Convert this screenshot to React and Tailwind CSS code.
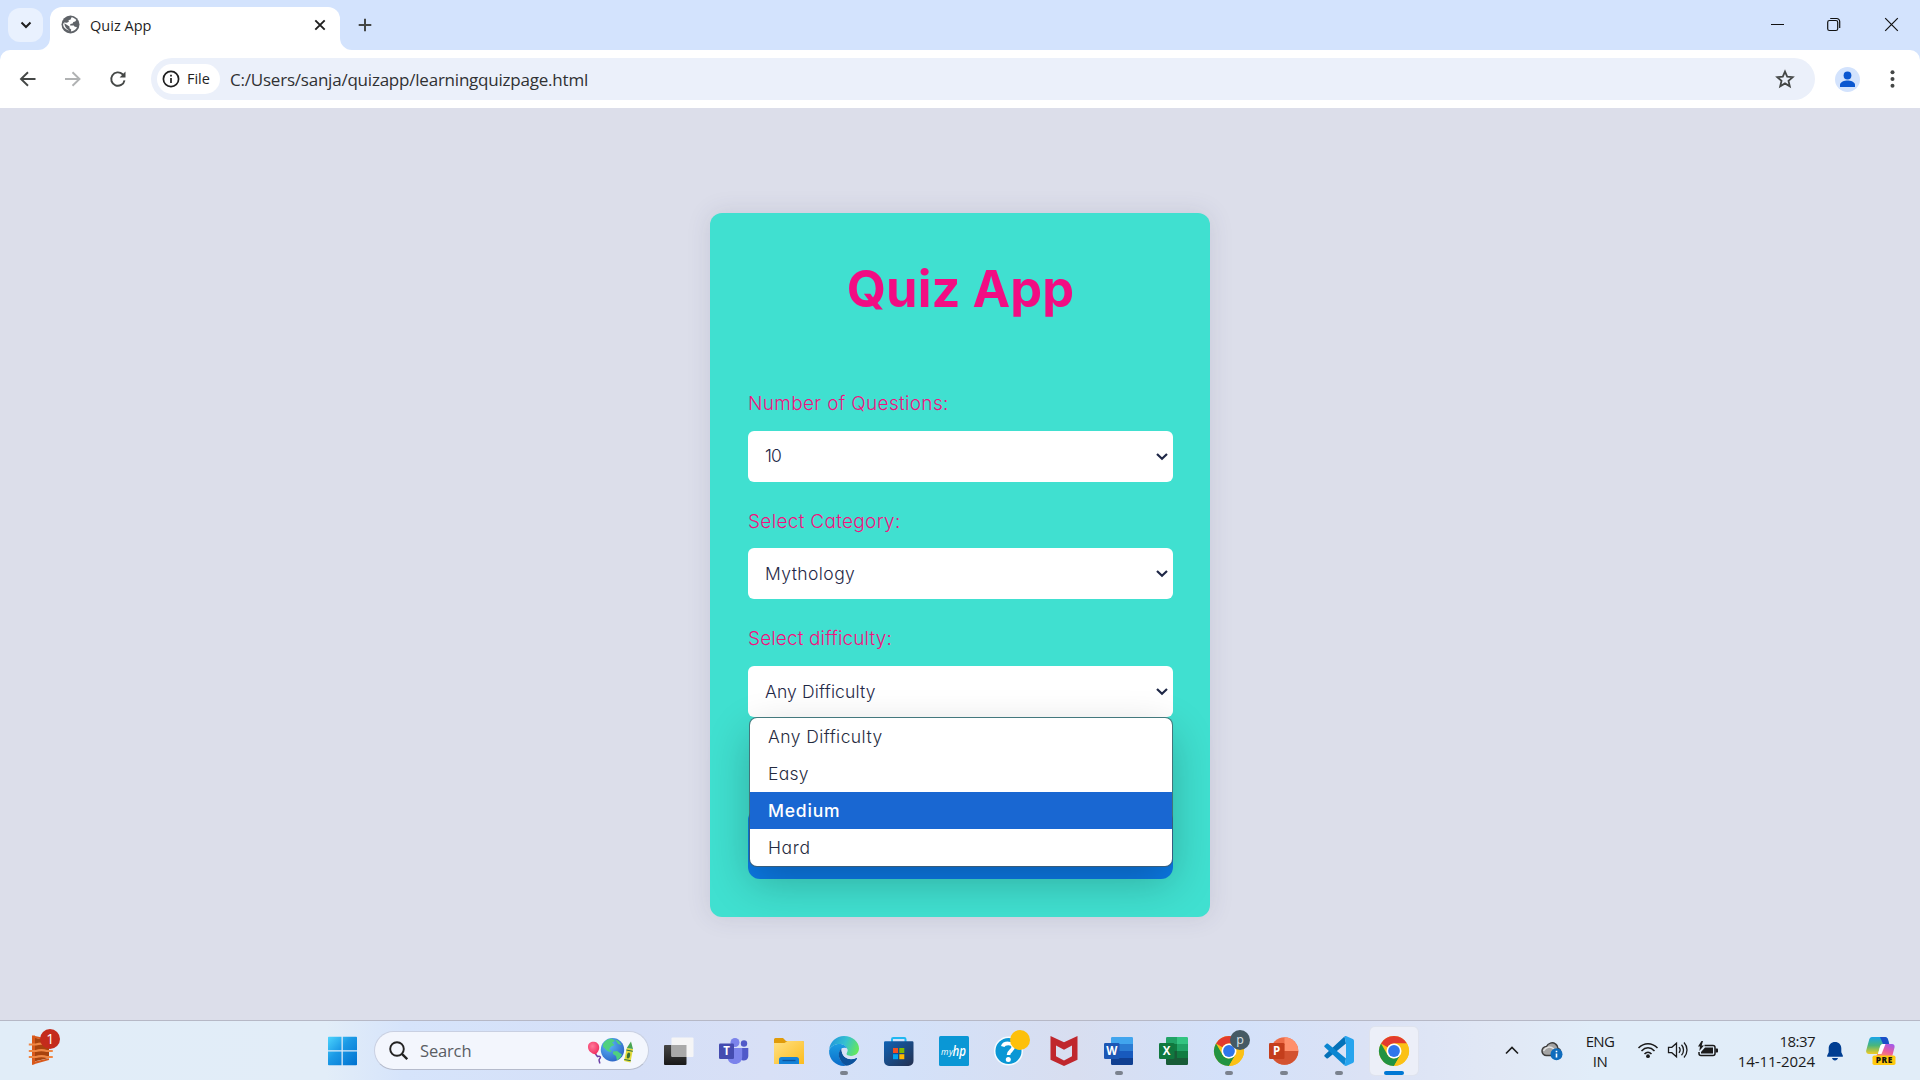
import React from "react";

/* ---------- Browser window ---------- */

function GlobeIcon() {
  return (
    <svg className="h-[19px] w-[19px]" viewBox="0 0 19 19">
      <circle cx="9.5" cy="9.5" r="9" fill="#5f6368" />
      <path d="M10.6 2.2c1.5.2 3.600 1.300 4.700 2.900l-1.100 1.500-1.900.3-.6 1.700-2.300.4-.3 1.500h3.700l.9 1.300 2.300.3c-.7 2.300-3.200 4.400-6.100 4.500l.3-2-1.700-1.400v-1.800L3.300 8.200c.4 4 2.600 6.400 5.300 7.300-3.700-.4-6.500-3-6.500-6.400l1.100-1.700 2.700.4 1.900-1-.2-1.700 1.800-.3z" fill="#fff" />
    </svg>
  );
}

function TitleBar() {
  return (
    <div className="flex h-[50px] bg-[#d3e3fd] text-[#1f1f1f]">
      <div className="mt-2 ml-2 flex h-[34px] w-[35px] items-center justify-center rounded-[12px] bg-[#e9f1fe]">
        <svg className="h-3 w-3" viewBox="0 0 12 12" fill="none" stroke="#1f1f1f" strokeWidth="2"><path d="M1.500 3.500 6 8l4.500-4.500" /></svg>
      </div>
      <svg className="mt-auto -ml-[5px] h-[12px] w-[12px] shrink-0" viewBox="0 0 12 12"><path d="M12 0v12H0A12 12 0 0 0 12 0z" fill="#fff" /></svg>
      <div className="mt-[7px] flex w-[290px] items-center rounded-t-[12px] bg-white pr-[13px] pb-[8px] pl-[11px]">
        <GlobeIcon />
        <span className="mt-[2px] ml-[10px] font-['Open_Sans',sans-serif] text-[14.500px] tracking-[0.020px]">Quiz App</span>
        <svg className="ml-auto h-[14px] w-[14px]" viewBox="0 0 14 14" stroke="#1f1f1f" strokeWidth="1.900"><path d="M2.300 2.300l9.400 9.400M11.700 2.300l-9.400 9.400" /></svg>
      </div>
      <svg className="mt-auto h-[12px] w-[12px] shrink-0" viewBox="0 0 12 12"><path d="M0 0v12h12A12 12 0 0 1 0 0z" fill="#fff" /></svg>
      <svg className="mt-[18px] ml-[6px] h-[14px] w-[14px]" viewBox="0 0 14 14" stroke="#444746" strokeWidth="2"><path d="M7 .7v12.600M.7 7h12.600" /></svg>
      <div className="mt-[17px] mr-[21px] ml-auto flex h-[15px] gap-[42px]">
        <svg className="h-[15px] w-[15px]" viewBox="0 0 15 15"><path d="M1 7.500h13" stroke="#111" strokeWidth="1" /></svg>
        <svg className="h-[15px] w-[15px]" viewBox="0 0 15 15" fill="none" stroke="#111" strokeWidth="1.200"><rect x="0.700" y="3.500" width="10" height="10" rx="1.800" /><path d="M3.200 1.500h6.500a3 3 0 0 1 3 3V11" /></svg>
        <svg className="h-[15px] w-[15px]" viewBox="0 0 15 15" stroke="#111" strokeWidth="1.200"><path d="M1.200 1.200l12.600 12.600M13.800 1.200L1.200 13.800" /></svg>
      </div>
    </div>
  );
}

function Toolbar() {
  return (
    <div className="bg-[#d3e3fd]">
      <div className="flex h-[58px] items-center rounded-t-[10px] bg-white pl-[19px]">
        <svg className="h-[18px] w-[18px]" viewBox="0 0 18 18" fill="none" stroke="#444746" strokeWidth="1.900"><path d="M16.500 9H2.500M9 2.200 2 9l7 6.800" /></svg>
        <svg className="ml-[27px] h-[18px] w-[18px]" viewBox="0 0 18 18" fill="none" stroke="#b0b2b3" strokeWidth="1.900"><path d="M1 9h14M8.500 2.200 15.500 9l-7 6.800" /></svg>
        <svg className="ml-[27px] h-[18px] w-[18px]" viewBox="0 0 18 18" fill="none"><path d="M15.500 10.300A6.700 6.700 0 1 1 13.600 4.300l1.200 1.200" stroke="#444746" strokeWidth="1.900" /><path d="M16.500 1.500v5.900h-5.900z" fill="#444746" /></svg>
        <div className="ml-[24px] flex h-[42px] w-[1664px] items-center rounded-full bg-[#ebf0fa] pr-[20px] pl-[6px]">
          <div className="flex h-[30px] w-[63px] items-center rounded-full bg-white pl-[5px]">
            <svg className="h-[18px] w-[18px]" viewBox="0 0 18 18" fill="none" stroke="#1f1f1f" strokeWidth="1.700"><circle cx="9" cy="9" r="7.600" /><path d="M9 8v5M9 4.700v1.900" /></svg>
            <span className="ml-[7px] font-['Open_Sans',sans-serif] text-[14.500px] font-medium tracking-[-0.050px] text-[#1f1f1f]">File</span>
          </div>
          <span className="mt-[1px] ml-[10px] font-['Open_Sans',sans-serif] text-[17px] tracking-[-0.217px] text-[#303133]">C:/Users/sanja/quizapp/learningquizpage.html</span>
          <svg className="ml-auto h-5 w-5" viewBox="0 0 20 20" fill="none" stroke="#444746" strokeWidth="1.800"><path d="M10 2.600l2.200 5.100 5.500.5-4.200 3.700 1.300 5.400L10 14.400l-4.800 2.900 1.300-5.400L2.300 8.200l5.500-.5z" /></svg>
        </div>
        <svg className="ml-[20px] h-[25px] w-[25px]" viewBox="0 0 25 25"><circle cx="12.500" cy="12.500" r="12.500" fill="#d3e3fd" /><circle cx="12.500" cy="8.500" r="3.900" fill="#0b57d0" /><path d="M5 20v-2.300c0-2.700 4.500-4.200 7.500-4.200s7.500 1.500 7.500 4.200V20z" fill="#0b57d0" /></svg>
        <svg className="ml-[30px] h-[18px] w-[5px]" viewBox="0 0 5 18" fill="#444746"><circle cx="2.500" cy="2.200" r="2" /><circle cx="2.500" cy="9" r="2" /><circle cx="2.500" cy="15.800" r="2" /></svg>
      </div>
    </div>
  );
}

/* ---------- Quiz settings form ---------- */

function Label({ className, children }) {
  return (
    <div className={"flex h-[24px] items-center font-[350] whitespace-nowrap text-[19px] text-[#f2127f] " + className}>{children}</div>
  );
}

function SelectBox({ className = "", children }) {
  return (
    <div className={"flex h-[51px] items-center justify-between rounded-[6px] bg-white pr-[5px] pl-[17px] text-[17.500px] text-[#1f2847] " + className}>
      {children}
      <svg className="h-[12px] w-[12px]" viewBox="0 0 12 12" fill="none" stroke="#1f2847" strokeWidth="2.200"><path d="M1 3l5 4.800L11 3" /></svg>
    </div>
  );
}

function QuizCard() {
  return (
    <div className="mx-auto mt-[105px] flex h-[704px] w-[500px] flex-col rounded-[12px] bg-[#40e0d0] pr-[37px] pl-[38px] font-['Inter',sans-serif] font-[350] shadow-[0_0_24px_rgba(60,60,100,0.13)] [font-feature-settings:'cv11','ss03']">
      <h1 className="mt-[46px] flex h-[60px] items-center justify-center text-[50.500px] font-bold tracking-[0.100px] text-[#f20d83]">Quiz App</h1>
      <Label className="mt-[73px] tracking-[0.330px]">Number of Questions:</Label>
      <SelectBox className="mt-[15px]"><span className="tracking-[-0.800px]">10</span></SelectBox>
      <Label className="mt-[28px] tracking-[0.310px]">Select Category:</Label>
      <SelectBox className="mt-[14px]"><span className="mt-[2px] tracking-[0.430px]">Mythology</span></SelectBox>
      <Label className="mt-[28px] tracking-[0.130px]">Select difficulty:</Label>
      <div className="relative mt-[15px]">
        <SelectBox><span className="mt-[1px] tracking-[0.150px]">Any Difficulty</span></SelectBox>
        <div className="absolute top-[52px] right-[1px] left-[2px] z-10 rounded-[7px] bg-white text-[17.500px] text-[#262b40] shadow-[0_0_0_1px_rgba(70,90,100,0.75),0_16px_44px_rgba(0,0,0,0.24)]">
          <div className="flex h-[37px] items-center pt-[2px] pl-[18px] tracking-[0.430px]">Any Difficulty</div>
          <div className="flex h-[37px] items-center pt-[2px] pl-[18px] tracking-[0.250px]">Easy</div>
          <div className="flex h-[37px] items-center bg-[#1967d2] pt-[2px] pl-[18px] font-medium tracking-[0.800px] text-white">Medium</div>
          <div className="flex h-[37px] items-center pt-[2px] pl-[18px] tracking-[0.650px]">Hard</div>
        </div>
      </div>
      <div className="mt-[91px] h-[71px] rounded-[12px] bg-[#0c7be8]" />
    </div>
  );
}

/* ---------- Taskbar ---------- */

function Icon({ children }) {
  return <svg className="h-[30px] w-[30px] shrink-0 overflow-visible" viewBox="0 0 30 30">{children}</svg>;
}

function TaskItem({ running, active, children }) {
  return (
    <div className="flex h-[59px] w-[55px] shrink-0 items-center justify-center">
      <div className={"relative flex h-[48px] w-[48px] items-center justify-center rounded-[5px] " + (active ? "bg-[#eceff8] shadow-[0_0_0_1px_#dfe3ee]" : "")}>
        {children}
        {running && <div className="absolute bottom-0 left-[20px] h-[4px] w-[8px] rounded-full bg-[#7b828e]" />}
        {active && <div className="absolute bottom-0 left-[14px] h-[4px] w-[20px] rounded-full bg-[#0078d4]" />}
      </div>
    </div>
  );
}

function TempleIcon() {
  return (
    <svg className="mb-[7px] ml-[28px] h-[34px] w-[34px] overflow-visible" viewBox="0 0 34 34">
      <path d="M4 7l17 4v17L4 32z" fill="#a8430e" />
      <path d="M4 5.500h3V34l-3 1z" fill="#d9591b" />
      <path d="M7 31.500l14-3.200v1.800L5 34.500z" fill="#d9591b" />
      <path d="M7 6l14 3v2L7 8z" fill="#d9591b" />
      <g fill="none" stroke="#ef8745" strokeWidth="2.100"><path d="M.8 14.500h7c5-1.500 8-1 11 0h6M.8 21h7c5-1.500 8-1 11 0h6M.8 27h7c5-1.500 8-1 11 0h6" /></g>
      <circle cx="22" cy="9" r="10" fill="#c42b1c" />
      <text x="22.300" y="14" textAnchor="middle" fill="#fff" fontSize="14" fontFamily="Open Sans">1</text>
    </svg>
  );
}

function WindowsIcon() {
  return (
    <Icon>
      <defs><linearGradient id="win" gradientUnits="userSpaceOnUse" x1="0" y1="0" x2="29" y2="29"><stop offset="0" stopColor="#4fd8ff" /><stop offset=".45" stopColor="#1c9ae6" /><stop offset="1" stopColor="#0072d0" /></linearGradient></defs>
      <path d="M1 1.500a.8.8 0 0 1 .8-.8h12.700v13.500H1zM15.800.7H29.200a.8.8 0 0 1 .8.8v12.700H15.800zM1 15.500h13.500v13.800H1.800a.8.8 0 0 1-.8-.8zM15.800 15.500H30v13a.8.8 0 0 1-.8.8H15.800z" fill="url(#win)" />
    </Icon>
  );
}

function SearchPill() {
  return (
    <div className="ml-[17px] flex h-[39px] w-[275px] items-center rounded-full border border-[#c9d0e2] border-b-[#b5bbcc] bg-[#f3f6fd] pr-[12px] pl-[14px]">
      <svg className="h-[19px] w-[19px]" viewBox="0 0 19 19" fill="none" stroke="#222" strokeWidth="1.900"><circle cx="8" cy="8" r="6.800" /><path d="M12.900 12.900l5.300 5.300" strokeWidth="2.300" /></svg>
      <span className="mt-[1px] ml-[12px] font-['Open_Sans',sans-serif] text-[16.500px] tracking-[-0.150px] text-[#5a5d63]">Search</span>
      <svg className="ml-auto h-[28px] w-[49px] overflow-visible" viewBox="0 0 49 28">
        <defs>
          <radialGradient id="earth" cx=".35" cy=".3" r=".8"><stop offset="0" stopColor="#5cb8f8" /><stop offset="1" stopColor="#2a5fc4" /></radialGradient>
          <radialGradient id="balloon" cx=".4" cy=".35" r=".7"><stop offset="0" stopColor="#ff7a9a" /><stop offset="1" stopColor="#f0285c" /></radialGradient>
        </defs>
        <path d="M8.500 17l2 2.500c2.500-1 4 .5 2 2.500-1.500 1.500.5 2 .2 4.500" fill="none" stroke="#6b3fa6" strokeWidth="1.500" />
        <path d="M1 10C1 6 4 4.500 7 4.800c4 .4 6 4 5 7.500-.8 3-2.500 4.200-3.300 5.200C4 16.500 1 13.500 1 10z" fill="url(#balloon)" />
        <circle cx="25.500" cy="12.800" r="11.700" fill="url(#earth)" />
        <path d="M16 7c2-3.500 5-5.200 9-5.500l3 2.500-3 1.500 2.500 2.500-3.500 1.500-2 3 3 1.500-2 1c-4-1-5-4-7-5zM28 2.500l4 1.500 2.500 4-3.500-1zM26 14.500l4-.5 5 3.500-1.500 3-3.500 3-1-4.500-3-2z" fill="#4fd07f" />
        <path d="M39.800 11l6.200 1-2.500 13.500-6.500-1.500z" fill="#e4dc3c" /><path d="M39.800 11l4.200-6.500 2 7.500z" fill="#49a452" /><path d="M39.300 13l6.500 1.300M37.300 22.500l6.500 1.200" stroke="#2a6b40" strokeWidth="1" /><ellipse cx="41.500" cy="18.500" rx="1.700" ry="3" transform="rotate(12 41.500 18.500)" fill="#3b6f35" />
      </svg>
    </div>
  );
}

function ChromeLogo() {
  return (
    <g>
      <circle cx="15" cy="15" r="15" fill="#fbc116" />
      <path d="M2 7.500A15 15 0 0 1 28 7.500H15A7.500 7.500 0 0 0 8.500 11.250z" fill="#e33b2e" />
      <path d="M2 7.500l6.500 11.250A7.500 7.500 0 0 0 15 22.500l0 0 6.500-3.750L15 30A15 15 0 0 1 2 7.500z" fill="#229342" />
      <path d="M15 7.500h13A15 15 0 0 1 15 30l6.500-11.250z" fill="#fbc116" />
      <circle cx="15" cy="15" r="7.500" fill="#fff" />
      <circle cx="15" cy="15" r="5.900" fill="#2f76ea" />
    </g>
  );
}

function OfficeTile({ letter, color }) {
  return (
    <g>
      <rect x="0" y="7" width="15.500" height="16" rx="1.300" fill={color} />
      <text x="7.700" y="19" textAnchor="middle" fill="#fff" fontSize="11.500" fontWeight="700" fontFamily="Open Sans">{letter}</text>
    </g>
  );
}

function Apps() {
  return (
    <>
      <TaskItem><Icon>
        <defs><linearGradient id="tv" x1="0" y1="0" x2="0" y2="1"><stop offset="0" stopColor="#464646" /><stop offset="1" stopColor="#191919" /></linearGradient></defs>
        <rect x="0" y="9" width="22.500" height="20" rx="1" fill="url(#tv)" /><rect x="7.500" y="1.500" width="22" height="19.500" rx="1" fill="#f5f5f6" /><path d="M7.500 9h15v12h-14a1 1 0 0 1-1-1z" fill="#a9a9a9" />
      </Icon></TaskItem>
      <TaskItem><Icon>
        <circle cx="25" cy="7.500" r="3.200" fill="#5059c9" /><path d="M20 12h9.300v8c0 3-2.300 4.500-4.500 4.500S20 23 20 20z" fill="#5059c9" />
        <circle cx="16" cy="6.500" r="4.500" fill="#7b83eb" /><path d="M8.500 12h14.700v9c0 4.500-3.500 7-7.300 7s-7.400-2.500-7.400-7z" fill="#7b83eb" />
        <rect x="0" y="7.500" width="15" height="15.500" rx="1.300" fill="#444bb0" /><text x="7.500" y="19.300" textAnchor="middle" fill="#fff" fontSize="11.500" fontWeight="700" fontFamily="Open Sans">T</text>
      </Icon></TaskItem>
      <TaskItem><Icon>
        <defs><linearGradient id="fold" x1="0" y1="0" x2="1" y2="1"><stop offset="0" stopColor="#ffe082" /><stop offset="1" stopColor="#fcbc1e" /></linearGradient></defs>
        <path d="M0 3.500A1.500 1.500 0 0 1 1.500 2H9l3 3h16.500A1.500 1.500 0 0 1 30 6.500V12H0z" fill="#e09b0a" /><path d="M0 7h10.500l3-2h15A1.500 1.500 0 0 1 30 6.500V28H0z" fill="url(#fold)" /><path d="M5 28v-4.500a2.500 2.500 0 0 1 2.500-2.500h15a2.500 2.500 0 0 1 2.500 2.500V28z" fill="#1482d8" /><path d="M8.500 24.500h13" stroke="#0c559e" strokeWidth="1.300" />
      </Icon></TaskItem>
      <TaskItem running><Icon>
        <defs>
          <linearGradient id="edgeTop" x1="0" y1=".3" x2="1" y2=".6"><stop offset="0" stopColor="#2096dc" /><stop offset=".5" stopColor="#35c1d0" /><stop offset="1" stopColor="#66e85a" /></linearGradient>
          <linearGradient id="edgeLow" x1="0" y1="0" x2="0" y2="1"><stop offset="0" stopColor="#1b9de2" /><stop offset="1" stopColor="#0b6cc9" /></linearGradient>
        </defs>
        <path d="M.2 13.500C1 5.500 7.500 0 15 0c8.500 0 15 6 15 12.500 0 4.500-3.500 7.500-8 7.500-3 0-4.700-1-4.700-2 0-.8 1.200-1.300 1.200-3.500C18.500 11 15 8 10.500 8 5.500 8 2 10.500.2 13.500z" fill="url(#edgeTop)" />
        <path d="M.1 14.500C1.500 10.500 5.500 8 10.500 8c4 0 7 2.300 7.800 5-1.500-1.500-6-1.500-7.800 2.500-1.800 4.200.3 10 6.500 14.300C8 31-.5 24 .1 14.500z" fill="url(#edgeLow)" />
        <path d="M12.500 12.500C9.500 15 9 19.500 11 23.500c2 4 5 6.200 6.500 6.200 4.500-.7 8-3.200 10.300-6.700.4-.7-.2-1.200-1-.8-5.500 2.600-14.500.3-14.300-9.700z" fill="#0c529c" />
        <path d="M12.500 12.500c1.800-1.300 4.800-1 5.800.5.400 2.800-1 3.800-1 5 0 1 1.700 2 4.700 2 2.500 0 4.500-.8 5.500-1.800l-.7 4c-7 3-14.800-1-14.300-9.700z" fill="#d8e0f6" />
        <path d="M12 15c0 6 5.500 10.500 13.500 8l2.500-.8c-1.500 3-5 6-9 7.200C13 27 10.500 20 12 15z" fill="#0c529c" />
      </Icon></TaskItem>
      <TaskItem><Icon>
        <defs><linearGradient id="store" x1="0" y1="0" x2="1" y2="1"><stop offset="0" stopColor="#0f62b5" /><stop offset="1" stopColor="#25304f" /></linearGradient></defs>
        <path d="M8 8V3.200A1.200 1.200 0 0 1 9.200 2h11.100a1.200 1.200 0 0 1 1.200 1.200V8" fill="none" stroke="#21b8f1" strokeWidth="2" /><path d="M0 6.500A1.200 1.200 0 0 1 1.200 5.300h27.100a1.200 1.200 0 0 1 1.200 1.200V25a5 5 0 0 1-5 5H5a5 5 0 0 1-5-5z" fill="url(#store)" />
        <path d="M9 12h5v5H9z" fill="#f25022" /><path d="M15.300 12h5v5h-5z" fill="#7fba00" /><path d="M9 18.200h5v5H9z" fill="#00a4ef" /><path d="M15.300 18.200h5v5h-5z" fill="#ffb900" />
      </Icon></TaskItem>
      <TaskItem><Icon>
        <rect width="30" height="30" rx="1.500" fill="#0a97d5" /><text x="2" y="18.500" fill="#fff" fontSize="8.500" fontStyle="italic" fontFamily="Open Sans" textLength="12">my</text><text x="13.500" y="19.500" fill="#fff" fontSize="14" fontWeight="600" fontStyle="italic" fontFamily="Open Sans" textLength="13.500" lengthAdjust="spacingAndGlyphs">hp</text>
      </Icon></TaskItem>
      <TaskItem><Icon>
        <circle cx="14.500" cy="15" r="13.800" fill="#0a97d5" stroke="#f5fbff" strokeWidth="1.500" /><path d="M8.700 10.500c1.200-4 10.300-4.400 10.500.6 0 3.500-4.700 3.700-4.700 8" fill="none" stroke="#fff" strokeWidth="3.600" /><circle cx="14.300" cy="23.500" r="2.500" fill="#fff" /><circle cx="26" cy="4" r="10" fill="#fdc00a" />
      </Icon></TaskItem>
      <TaskItem><Icon>
        <path fillRule="evenodd" d="M1.500 0L15 6.200 28.500 0v23.700L15 30 1.500 23.700zM7 9.500v10.800l8 4.200 8-4.200V9.500l-8 4.300z" fill="#c0272d" />
      </Icon></TaskItem>
      <TaskItem running><Icon>
        <path d="M7 2.300A1.300 1.300 0 0 1 8.300 1h19.500A1.300 1.300 0 0 1 29 2.300V8H7z" fill="#41a5ee" /><path d="M7 8h22v7H7z" fill="#2b7cd3" /><path d="M7 15h22v7H7z" fill="#185abd" /><path d="M7 22h22v5.700a1.300 1.300 0 0 1-1.200 1.300H8.300A1.300 1.300 0 0 1 7 27.700z" fill="#103f91" />
        <OfficeTile letter="W" color="#1c57b5" />
      </Icon></TaskItem>
      <TaskItem><Icon>
        <path d="M7 2.300A1.300 1.300 0 0 1 8.300 1H18v7H7z" fill="#21a366" /><path d="M18 1h9.800A1.300 1.300 0 0 1 29 2.300V8H18z" fill="#33c481" /><path d="M7 8h11v7H7z" fill="#107c41" /><path d="M18 8h11v7H18z" fill="#21a366" /><path d="M18 15h11v7H18z" fill="#107c41" /><path d="M7 15h11v7h11v5.700a1.300 1.300 0 0 1-1.200 1.300H8.300A1.300 1.300 0 0 1 7 27.700z" fill="#185c37" />
        <OfficeTile letter="X" color="#10783f" />
      </Icon></TaskItem>
      <TaskItem running><Icon>
        <ChromeLogo /><circle cx="26" cy="4" r="10" fill="#455a64" /><text x="26" y="8" textAnchor="middle" fill="#dbe2e6" fontSize="12.500" fontFamily="Open Sans">p</text>
      </Icon></TaskItem>
      <TaskItem running><Icon>
        <circle cx="15.500" cy="15" r="13.800" fill="#ed6c47" /><path d="M15.500 1.200A13.800 13.800 0 0 1 29.300 15H15.500z" fill="#ff8f6b" /><path d="M1.700 15h27.600a13.800 13.800 0 0 1-27.600 0z" fill="#d35230" />
        <OfficeTile letter="P" color="#c43e1c" />
      </Icon></TaskItem>
      <TaskItem running><Icon>
        <path d="M20.500.5L22 7.500 4 22.300c-.5.400-1.100.4-1.500 0L.6 20.600c-.5-.5-.5-1.200 0-1.700z" fill="#0471b8" /><path d="M20.500 29.500L22 22.500 4 7.700c-.5-.4-1.100-.4-1.500 0L.6 9.400c-.5.500-.5 1.200 0 1.700z" fill="#0b86d1" /><path d="M20.500.5c.6-.5 1.300-.6 2-.2l6.300 2.800A2 2 0 0 1 30 5v20a2 2 0 0 1-1.200 1.900l-6.300 2.800c-.7.400-1.400.3-2-.2l1.500-7V7.500z" fill="#27a4ee" />
      </Icon></TaskItem>
      <TaskItem active><Icon><ChromeLogo /></Icon></TaskItem>
    </>
  );
}

function Tray() {
  return (
    <div className="mr-[24px] ml-auto flex items-center font-['Open_Sans',sans-serif] text-[#1b1b1b]">
      <svg className="h-[14px] w-[14px]" viewBox="0 0 14 14" fill="none" stroke="#1b1b1b" strokeWidth="1.600"><path d="M1 9.500l6-6 6 6" /></svg>
      <svg className="ml-[22px] h-[20px] w-[22px]" viewBox="0 0 22 20">
        <path d="M5.500 14.500a4.500 4.500 0 0 1 0-9C7 2 11.500.8 14.500 3c2 1.300 2.500 3 2.500 4.500 3 .5 4 6 1 7z" fill="#a4a4a4" stroke="#3c3c3c" strokeWidth="1.500" /><path d="M2.500 10C5 5.500 9 5 13 8" fill="none" stroke="#e2e2e2" strokeWidth="1.500" />
        <circle cx="15.500" cy="13.300" r="6" fill="#0f6cbd" /><path d="M15.500 12.500v4M15.500 9.700v1.500" stroke="#fff" strokeWidth="1.600" />
      </svg>
      <div className="ml-[22px] w-[30px] text-center text-[15px] leading-[20px] tracking-[-0.600px]"><div>ENG</div><div>IN</div></div>
      <svg className="-mt-[2px] ml-[22px] h-[18px] w-[22px]" viewBox="0 0 22 18" fill="none" stroke="#1b1b1b" strokeWidth="1.500"><path d="M1.500 7c5.500-5.800 13.500-5.800 19 0M4.500 10c4-4.200 9-4.200 13 0M7.500 13c2.300-2.500 4.700-2.500 7 0" /><circle cx="11" cy="15.200" r="1.900" fill="#1b1b1b" stroke="none" /></svg>
      <svg className="-mt-[1px] ml-[8px] h-[18px] w-[22px]" viewBox="0 0 22 18" fill="none" stroke="#1b1b1b" strokeWidth="1.300"><path d="M1.500 6.300h3.300L9.500 2.200v13.600l-4.700-4.100H1.500zM12 6.200c1.300 1.600 1.300 4 0 5.600M14.500 3.800c2.700 3 2.700 7.400 0 10.400M17 1.500c4 4.300 4 10.700 0 15" /></svg>
      <svg className="-mt-[1px] ml-[8px] h-[18px] w-[22px]" viewBox="0 0 22 18" fill="none"><path d="M7.500 4.500H16a2 2 0 0 1 2 2v6a2 2 0 0 1-2 2H4a2 2 0 0 1-2-2V11" stroke="#1b1b1b" strokeWidth="1.500" /><path d="M8 6.500h8v6H4V11l4-4.500zM18.500 7.500H20c.8 0 1 .6 1 1v2c0 .6-.3 1-1 1h-1.500z" fill="#1b1b1b" /><path d="M4.500 0L1 5.500h2L2.300 10 7 4.500H4.700L6 0z" fill="#1b1b1b" /></svg>
      <div className="ml-[16px] w-[80px] text-right text-[15px] leading-[20px]"><div className="tracking-[-0.550px]">18:37</div><div className="tracking-[-0.100px]">14-11-2024</div></div>
      <svg className="ml-[11px] h-[20px] w-[18px]" viewBox="0 0 18 20" fill="#003e92"><path d="M9 1c3.700 0 6.300 2.700 6.300 6.300v4l1.600 3.500c.2.500-.1 1-.6 1H1.700c-.5 0-.8-.5-.6-1l1.600-3.500v-4C2.700 3.700 5.300 1 9 1zM6 17h6c-.4 1.600-1.500 2.400-3 2.400S6.400 18.600 6 17z" /></svg>
      <svg className="ml-[22px] h-[29px] w-[30px]" viewBox="0 0 30 29">
        <defs>
          <linearGradient id="cpA" x1="0" y1="0" x2="0" y2="1"><stop offset="0" stopColor="#18a4e8" /><stop offset=".5" stopColor="#49b67c" /><stop offset="1" stopColor="#f3cc22" /></linearGradient>
          <linearGradient id="cpB" x1=".8" y1="0" x2=".2" y2="1"><stop offset="0" stopColor="#a45ae8" /><stop offset=".5" stopColor="#ec5d9b" /><stop offset="1" stopColor="#fd9a5a" /></linearGradient>
        </defs>
        <path d="M6 1h13c1.500 0 2.500 1 3 2.500L23.200 8H17c-1.500 0-2.500 1-3 2.500L12 18H3c-2 0-3.300-1.500-2.800-3.500l3-11C3.700 2 4.500 1 6 1z" fill="url(#cpA)" />
        <path d="M14 1h5c1.500 0 2.500 1 3 2.500L23.200 8H17z" fill="#1a4fc8" />
        <path d="M18.500 8H26c2 0 3 1.500 2.500 3.500L26 21H7c2.500 0 3.700-1 4.200-3h2.300z" fill="url(#cpB)" />
        <path d="M17 8h2.500L15.500 18H12l2.200-7.500C14.700 9 15.500 8 17 8z" fill="#fff" />
        <rect x="6.500" y="19.500" width="23" height="9.500" rx="1.800" fill="#ffc90e" /><text x="18" y="27.300" textAnchor="middle" fontSize="8.300" fontWeight="800" fontFamily="Open Sans" fill="#16160c" textLength="16.500">PRE</text>
      </svg>
    </div>
  );
}

function Taskbar() {
  return (
    <div className="flex h-[60px] items-center border-t border-[#b6b8c6] bg-[linear-gradient(90deg,#e1edf8_0%,#e2edf8_17%,#d6e4fb_21%,#d5dff7_33%,#d8e0f6_40%,#d3e1f9_47%,#d8def0_56%,#d3e1fa_64%,#dbe2f5_71%,#e1e8f5_78%,#e1edf9_83%,#e1edf8_100%)]">
      <div className="w-[327px]"><TempleIcon /></div>
      <WindowsIcon />
      <SearchPill />
      <div className="ml-[2.500px] flex"><Apps /></div>
      <Tray />
    </div>
  );
}

export default function App() {
  return (
    <div className="flex h-[1080px] w-[1920px] flex-col overflow-hidden">
      <TitleBar />
      <Toolbar />
      <main className="flex-1 overflow-hidden bg-[#dcdeea]"><QuizCard /></main>
      <Taskbar />
    </div>
  );
}
